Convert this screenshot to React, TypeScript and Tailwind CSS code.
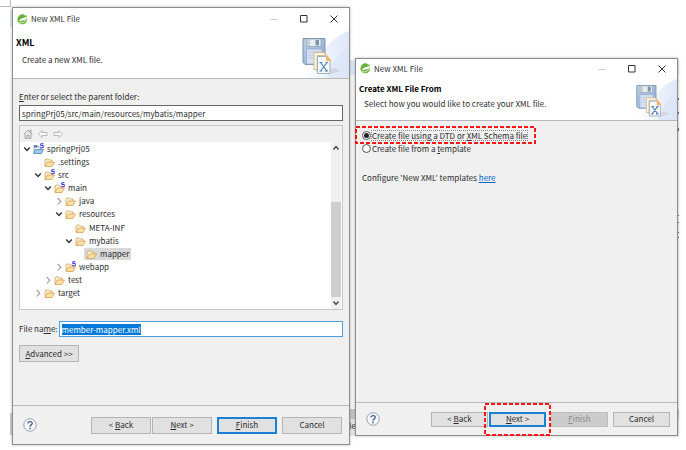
import { useEffect, useRef, useState } from 'react'
import type { ReactNode } from 'react'

const nodes = [
    { name: 'springPrj05', pad: 'pl-[3px]', state: 'open', icon: 'project' },
    { name: '.settings', pad: 'pl-[14px]', state: 'leaf', icon: 'folder' },
    { name: 'src', pad: 'pl-[14px]', state: 'open', icon: 'spring' },
    { name: 'main', pad: 'pl-[24px]', state: 'open', icon: 'spring' },
    { name: 'java', pad: 'pl-[35px]', state: 'closed', icon: 'folder' },
    { name: 'resources', pad: 'pl-[35px]', state: 'open', icon: 'folder' },
    { name: 'META-INF', pad: 'pl-[45px]', state: 'leaf', icon: 'folder' },
    { name: 'mybatis', pad: 'pl-[45px]', state: 'open', icon: 'folder' },
    { name: 'mapper', pad: 'pl-[56px]', state: 'leaf', icon: 'folder' },
    { name: 'webapp', pad: 'pl-[35px]', state: 'closed', icon: 'spring' },
    { name: 'test', pad: 'pl-[24px]', state: 'closed', icon: 'folder' },
    { name: 'target', pad: 'pl-[14px]', state: 'closed', icon: 'folder' },
]

const SpringLogo = () => (
    <svg className="size-[11px]" viewBox="0 0 22 22">
        <path d="M19 2C21 8 21 15 16 19C11 22 5 21 2 16C-1 10 2 3 8 1C12 0 15 1 17 4Z" fill="#68b33a" />
        <path d="M19 5C15 9 6 7 4 15C10 11 15 16 20 8Z" fill="#fff" />
        <path d="M4 17C10 19 15 17 18 11" fill="none" stroke="#fff" strokeWidth="1.5" />
    </svg>
)

const Banner = ({ className }: { className: string }) => (
    <svg className={className} viewBox="0 0 52 48" preserveAspectRatio="xMaxYMid meet">
        <defs>
            <linearGradient id="swoosh" x1="0" y1="0" x2="1" y2="0">
                <stop offset="0" stopColor="#fff" />
                <stop offset="0.5" stopColor="#eff4fd" />
                <stop offset="1" stopColor="#dfe8f9" />
            </linearGradient>
            <linearGradient id="disk" x1="0" y1="0" x2="1" y2="1">
                <stop offset="0" stopColor="#bccfe4" />
                <stop offset="1" stopColor="#8ea8d0" />
            </linearGradient>
        </defs>
        <path d="M52 1C40 5 30 13 26 24L4 48H52Z" fill="url(#swoosh)" />
        <path d="M52 18C42 22 34 34 30 48H52Z" fill="#d6e1f6" opacity="0.5" />
        <path d="M30 41L38 38L43 41L34 44Z" fill="#c9c2cc" opacity="0.5" />
        <path d="M6 8.5H28V34.5H8L6 32.5Z" fill="url(#disk)" stroke="#7d93b0" />
        <path d="M10 9H24V16.500H10Z" fill="#e6edf0" stroke="#8b9fb3" strokeWidth="0.7" />
        <path d="M18.500 10H22V15.500H18.500Z" fill="#7f94ab" />
        <path d="M12 10V16" stroke="#9fb0b9" />
        <path d="M9.500 19H25V34H9.500Z" fill="#d5e1f3" stroke="#8ea8d0" strokeWidth="0.7" />
        <path d="M11 22H24M11 25H24M11 28H24" stroke="#bccde7" />
        <path d="M17 22.500H27L30 26V39.500H17Z" fill="#fbf7e9" stroke="#dcb98a" />
        <path d="M20 25.500H28L31 28V41.500H20Z" fill="#f4f7ed" stroke="#cbbf9c" />
        <path d="M20.500 26.500H29L33 30.500V43.500H20.500Z" fill="#f6f9fd" stroke="#a0b1b4" />
        <path d="M27.500 22.500L33.500 29.500V31H29V27Z" fill="#f2b465" />
        <path d="M23.500 32.500L30 41M30 32.500L23.500 41M22.500 32.500H25.500M28.500 32.500H31M22.500 41H25M28 41H31" stroke="#5583b8" strokeWidth="1.200" />
    </svg>
)

const NodeIcon = ({ kind }: { kind: string }) => (
    <svg className="ml-[2px] h-[12px] w-[11px] shrink-0" viewBox="0 0 22 24">
        {kind === 'project' ? (
            <>
                <path d="M2 20V5H8L10 8H16V20Z" fill="#eef3fa" stroke="#7d94ba" strokeWidth="1.500" />
                <path d="M2 5H9V9H2Z" fill="#55709e" />
                <path d="M1 21L5 13H21L17 21Z" fill="#9cc8ee" stroke="#4f80b8" strokeWidth="1.500" />
            </>
        ) : (
            <>
                <path d="M2 20V8L4 6H9L11 8H16V12" fill="#fdf0d0" stroke="#cb9748" strokeWidth="1.400" />
                <path d="M2 21L7 12H21L16 21Z" fill="#fde0a2" stroke="#cb9748" strokeWidth="1.400" />
            </>
        )}
        {kind !== 'folder' && (
            <path d="M21 1.500H15.500V5H20.500V9.500H14.500" fill="none" stroke="#3036df" strokeWidth="2" />
        )}
    </svg>
)

const Twisty = ({ state }: { state: string }) => (
    <svg className="size-[8px] shrink-0" viewBox="0 0 8 8" fill="none">
        {state === 'open' && <path d="M1.200 2.500L4 5.500L6.800 2.500" stroke="#333" strokeWidth="1.400" />}
        {state === 'closed' && <path d="M2.800 1L5.800 4.200L2.800 7.500" stroke="#999" strokeWidth="1.100" />}
    </svg>
)

const HelpButton = () => (
    <button aria-label="Help" className="mr-auto">
        <svg className="size-[14px]" viewBox="0 0 28 28" fill="none">
            <circle cx="14" cy="14" r="12.500" fill="#f7f9fc" stroke="#7c8aa1" strokeWidth="1.600" />
            <path d="M10 11C10 6 18.500 6 18.500 10.500C18.500 14 14 13.500 14 17.500" stroke="#465a80" strokeWidth="2.600" />
            <path d="M14 19.500V22.500" stroke="#465a80" strokeWidth="3" />
        </svg>
    </button>
)

const TitleBar = ({ className }: { className: string }) => (
    <div className={`flex items-center bg-white pl-[4px] text-[#333] ${className}`}>
        <SpringLogo />
        <span className="ml-[3px] flex-1">New XML File</span>
        <div className="flex gap-[22px]">
            <button aria-label="Minimize">
                <svg className="size-[8px]" viewBox="0 0 8 8"><path d="M0.500 4.500H7.500" stroke="#ccc" /></svg>
            </button>
            <button aria-label="Maximize">
                <svg className="size-[8px]" viewBox="0 0 8 8"><path d="M0.500 0.500H7V7H0.500Z" fill="none" stroke="#333" /></svg>
            </button>
            <button aria-label="Close">
                <svg className="size-[8px]" viewBox="0 0 8 8"><path d="M0.500 0.500L7.500 7.500M7.500 0.500L0.500 7.500" stroke="#333" /></svg>
            </button>
        </div>
    </div>
)

const btn = 'border border-[#b4b4b4] bg-[#e1e1e1] text-center'
const primary = 'border-2 border-[#1c7fd6] bg-[#e1e1e1] text-center'

const Window = ({ label, children }: { label: string, children: ReactNode }) => (
    <section
        aria-label={label}
        className="relative min-w-0 border border-[#8c8c8c] bg-[#f0f0f0] shadow-[0_0_3px_rgba(0,0,0,0.25)]">
        {children}
    </section>
)

const FolderTree = () => {
    const [selected, setSelected] = useState('mapper')
    return (
        <div className="mt-[4px] border border-[#c6c6ca]">
            <div className="flex h-[16px] items-center gap-[5px] pl-[3px]">
                <button aria-label="Home">
                    <svg className="size-[10px]" viewBox="0 0 20 20" fill="#e5e5e5" stroke="#9a9a9a" strokeWidth="1.500">
                        <path d="M4 9V19H16V9M1 11L10 2L19 11M14 6V2H16V8" />
                        <path d="M8 19V12H12V19" />
                    </svg>
                </button>
                <button aria-label="Back">
                    <svg className="size-[10px]" viewBox="0 0 20 20" fill="#fafafa" stroke="#aaa" strokeWidth="1.600">
                        <path d="M1 10L8 3V7H18V13H8V17Z" />
                    </svg>
                </button>
                <button aria-label="Forward">
                    <svg className="size-[10px]" viewBox="0 0 20 20" fill="#fafafa" stroke="#aaa" strokeWidth="1.600">
                        <path d="M19 10L12 3V7H2V13H12V17Z" />
                    </svg>
                </button>
            </div>
            <div className="flex bg-white">
                <ul role="tree" aria-label="Folders" className="grid h-[158px] flex-1 grid-rows-12">
                    {nodes.map(n => (
                        <li
                            key={n.name}
                            role="treeitem"
                            aria-selected={selected === n.name}
                            className={`flex items-center ${n.pad}`}
                            onClick={() => setSelected(n.name)}>
                            <Twisty state={n.state} />
                            <span className={`flex items-center pr-[2px] ${selected === n.name ? 'bg-[#d9d9d9]' : ''}`}>
                                <NodeIcon kind={n.icon} />
                                <span className="ml-[3px]">{n.name}</span>
                            </span>
                        </li>
                    ))}
                </ul>
                <div className="mr-px flex h-[167px] w-[10px] flex-col items-center bg-[#f0f0f0]">
                    <svg className="my-[2px] size-[8px] shrink-0" viewBox="0 0 8 8" fill="none" stroke="#444" strokeWidth="1.400">
                        <path d="M1.500 5.500L4 2.500L6.500 5.500" />
                    </svg>
                    <div className="mt-[48px] w-full flex-1 bg-[#cdcdcd]" />
                    <svg className="my-[2px] size-[8px] shrink-0" viewBox="0 0 8 8" fill="none" stroke="#444" strokeWidth="1.400">
                        <path d="M1.500 2.500L4 5.500L6.500 2.500" />
                    </svg>
                </div>
            </div>
        </div>
    )
}

const NewFileWindow = () => {
    const nameRef = useRef<HTMLInputElement>(null)

    useEffect(() => {
        nameRef.current?.focus()
        nameRef.current?.select()
    }, [])

    return (
        <Window label="New XML File: name">
            <TitleBar className="h-[22px] pr-[11px]" />
            <header className="flex h-[49px] justify-between border-b border-[#b8b8b8] bg-white">
                <div className="pl-[3px] pt-[7px]">
                    <h1 className="text-[9px] font-bold text-black">XML</h1>
                    <p className="ml-[6px] mt-[5px]">Create a new XML file.</p>
                </div>
                <Banner className="h-[48px] w-[52px]" />
            </header>
            <div className="px-[6px] pb-[43px] pt-[12px]">
                <label htmlFor="folder" className="block"><u>E</u>nter or select the parent folder:</label>
                <input
                    id="folder"
                    className="mt-[2px] block h-[16px] w-full border border-[#666] bg-white px-[2px]"
                    defaultValue="springPrj05/src/main/resources/mybatis/mapper" />
                <FolderTree />
                <div className="mt-[11px] flex items-center gap-px">
                    <label htmlFor="filename">File na<u>m</u>e:</label>
                    <input
                        id="filename"
                        ref={nameRef}
                        className="h-[16px] min-w-0 flex-1 border border-[#4a9ee0] bg-white px-[2px] outline-none selection:bg-[#0078d7] selection:text-white"
                        defaultValue="member-mapper.xml" />
                </div>
                <button className={`mt-[8px] block h-[17px] w-[60px] ${btn}`}><u>A</u>dvanced &gt;&gt;</button>
            </div>
            <footer className="flex h-[39px] items-center gap-[5px] border-t border-[#b8b8b8] pl-[10px] pr-[7px]">
                <HelpButton />
                <div className="flex gap-px">
                    <button className={`h-[17px] w-[60px] ${btn}`}>&lt; <u>B</u>ack</button>
                    <button className={`h-[17px] w-[60px] ${btn}`}><u>N</u>ext &gt;</button>
                </div>
                <button className={`h-[17px] w-[60px] ${primary}`}><u>F</u>inish</button>
                <button className={`h-[17px] w-[60px] ${btn}`}>Cancel</button>
            </footer>
        </Window>
    )
}

const radio = 'grid size-[9px] shrink-0 appearance-none place-items-center rounded-full border border-[#555] bg-white checked:before:size-[5px] checked:before:rounded-full checked:before:bg-[#222]'

const Highlight = ({ className }: { className: string }) => (
    <svg aria-hidden="true" className={`pointer-events-none absolute overflow-visible ${className}`}>
        <rect width="100%" height="100%" fill="none" stroke="#ff1414" strokeWidth="2" strokeDasharray="4 2" />
    </svg>
)

const CreateFromWindow = () => (
    <Window label="New XML File: source">
        <TitleBar className="h-[19px] pr-[11px]" />
        <header className="flex h-[43px] justify-between border-b border-[#b8b8b8] bg-white">
            <div className="pl-[3px] pt-[5px]">
                <h1 className="font-bold text-black">Create XML File From</h1>
                <p className="ml-[5px] mt-[3px]">Select how you would like to create your XML file.</p>
            </div>
            <Banner className="h-[42px] w-[46px]" />
        </header>
        <div className="px-[6px] pb-[218px] pt-[8px]">
            <div className="relative flex h-[13px] items-center">
                <input type="radio" id="schema" name="source" defaultChecked className={radio} />
                <label htmlFor="schema" className="h-[11px] border border-dotted border-[#888] leading-[9px]">
                    Create file using a DTD or <u>X</u>ML Schema file
                </label>
                <Highlight className="-left-[6px] -top-[2px] h-[16px] w-[179px]" />
            </div>
            <div className="flex h-[13px] items-center">
                <input type="radio" id="template" name="source" className={radio} />
                <label htmlFor="template" className="ml-px">Create file from a <u>t</u>emplate</label>
            </div>
            <p className="mt-[17px]">
                Configure 'New XML' templates <a href="#templates" className="text-[#0066cc] underline">here</a>
            </p>
        </div>
        <footer className="flex h-[33px] items-center gap-[5px] border-t border-[#b8b8b8] pl-[10px] pr-[7px]">
            <HelpButton />
            <div className="flex gap-px">
                <button className={`h-[15px] w-[57px] ${btn}`}>&lt; <u>B</u>ack</button>
                <div className="relative flex">
                    <button className={`h-[15px] w-[57px] leading-[10px] ${primary}`}><u>N</u>ext &gt;</button>
                    <Highlight className="-left-[4px] -top-[8px] h-[31px] w-[65px]" />
                </div>
            </div>
            <button disabled className="h-[15px] w-[57px] border border-[#bfbfbf] bg-[#ccc] text-center text-[#8b8b8b]"><u>F</u>inish</button>
            <button className={`h-[15px] w-[57px] ${btn}`}>Cancel</button>
        </footer>
    </Window>
)

// slivers of the editor that show around and between the two windows
const Desktop = () => (
    <div aria-hidden="true" className="absolute inset-0">
        <div className="absolute left-0 top-0 h-[7px] w-[11px] border-b border-r border-[#bbb]" />
        <div className="absolute left-[10px] top-[10px] h-[17px] w-[4px] bg-[#dce6f2]" />
        <div className="absolute left-[10px] top-[413px] h-[22px] w-[4px] bg-[#ccc]" />
        <div className="absolute bottom-[14px] left-[340px] right-[7px] top-[60px] flex flex-col bg-[#f6f6f6]">
            <div className="h-[15px] bg-[#dfe9f5]" />
            <div className="mt-auto h-[10px] bg-[#c6c6c6]" />
            <div className="h-[17px] bg-[#e6e6e6] pl-[9px] pt-[1px]">le</div>
        </div>
        <svg className="absolute right-[7px] top-[90px] h-[150px] w-[2px]" viewBox="0 0 2 150">
            <path d="M1 8V10M1 22V24M1 38V41M1 125V126M1 132V133M1 142V143M1 147V148" stroke="#3d7f92" strokeWidth="2" />
        </svg>
    </div>
)

export default function App() {
    return (
        <main className="relative bg-white pb-[5px] font-['Noto_Sans_CJK_KR',sans-serif] text-[8px] leading-[12px] text-[#2b2b2b]">
            <Desktop />
            <div className="relative grid grid-cols-[338fr_323fr] items-start gap-[5px] pl-[12px] pr-[8px] pt-[7px]">
                <NewFileWindow />
                <div className="grid pt-[51px]">
                    <CreateFromWindow />
                </div>
            </div>
        </main>
    )
}
